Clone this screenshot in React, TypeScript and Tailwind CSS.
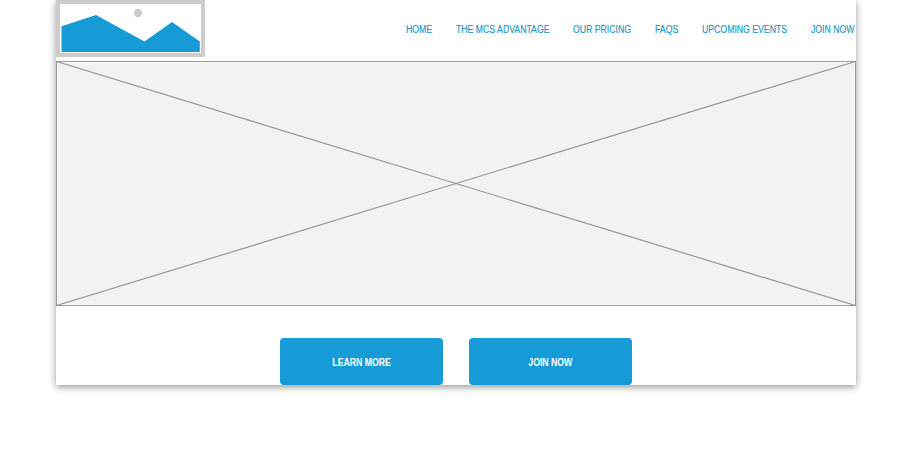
const links = [
  { label: 'HOME', width: 'w-[26px]' },
  { label: 'THE MCS ADVANTAGE', width: 'w-[93px]' },
  { label: 'OUR PRICING', width: 'w-[58px]' },
  { label: 'FAQS', width: 'w-[23px]' },
  { label: 'UPCOMING EVENTS', width: 'w-[85px]' },
  { label: 'JOIN NOW', width: 'w-[45px]' },
];

function Logo() {
  return (
    <svg className="block h-[57px] w-[149px]" viewBox="0 0 149 57" role="img" aria-label="Logo">
      <rect width="149" height="57" fill="#cccccc" />
      <rect x="4" y="4" width="141" height="49" fill="#ffffff" />
      <path d="M5.5 26.3 40 15 88.5 41.5 116 22 143.8 41.5V52H5.5Z" fill="#179bd7" />
      <circle cx="82" cy="13" r="4.2" fill="#cccccc" />
    </svg>
  );
}

function Hero() {
  return (
    <svg className="block h-[245px] w-[800px]" viewBox="0 0 800 245" aria-hidden="true">
      <rect x="0.5" y="0.5" width="799" height="244" fill="#f2f2f2" stroke="#999999" />
      <path d="M1.5 243.5V1.5H798.5V243.5Z" fill="none" stroke="#ffffff" strokeOpacity=".75" />
      <path d="M.5 .5 799.5 244.5M799.5 .5 .5 244.5" fill="none" stroke="#949494" strokeWidth="1.15" />
    </svg>
  );
}

function ActionButton({ children }: { children: string }) {
  return (
    <button className="h-[47px] w-[163px] rounded-[4px] bg-[#179bd7] pt-[3px] text-[10px] leading-none font-bold text-white">
      <span className="inline-block scale-x-[.87]">{children}</span>
    </button>
  );
}

export default function App() {
  return (
    <div className="h-[467px] w-[912px] overflow-hidden bg-white font-['Liberation_Sans',Arial,sans-serif]">
      <main className="mx-auto h-[385px] w-[800px] bg-white shadow-[0_2px_7px_rgba(0,0,0,0.42)]">
        <header className="flex h-[61px] items-start justify-between">
          <Logo />
          <nav className="flex gap-6 pt-6 text-[10px] leading-3 whitespace-nowrap text-[#1b96c6] [-webkit-text-stroke:0.15px_#1b96c6]">
            {links.map(({ label, width }) => (
              <a key={label} href="#" className={width}>
                <span className="inline-block origin-left scale-x-[.87]">{label}</span>
              </a>
            ))}
          </nav>
        </header>
        <Hero />
        <div className="flex justify-center gap-[26px] pt-8">
          <ActionButton>LEARN MORE</ActionButton>
          <ActionButton>JOIN NOW</ActionButton>
        </div>
      </main>
    </div>
  );
}
